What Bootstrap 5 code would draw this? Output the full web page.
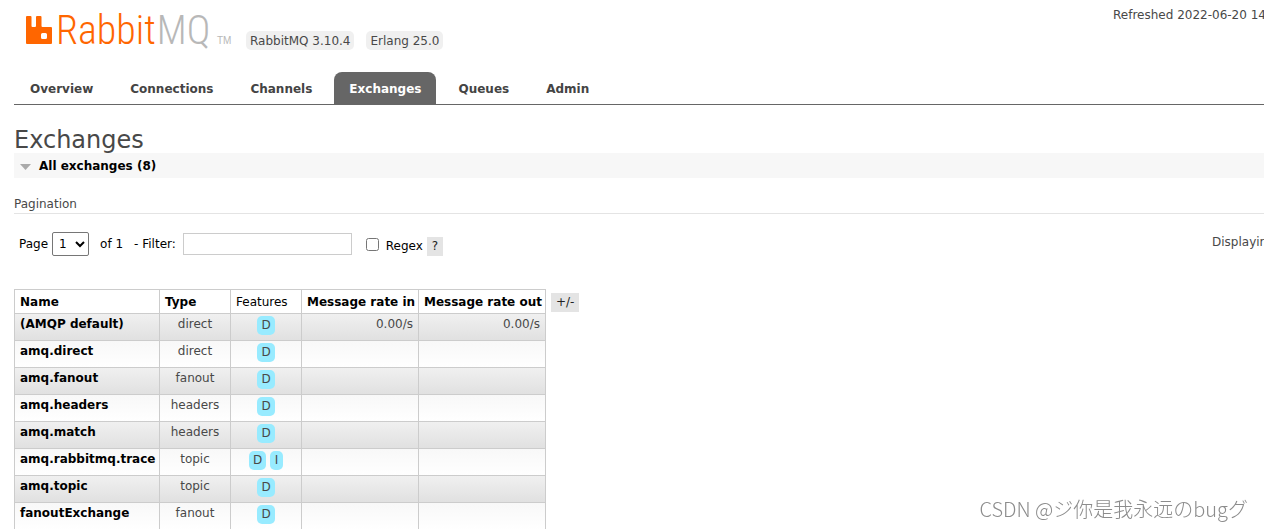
<!DOCTYPE html>
<html lang="en">
<head>
<meta charset="utf-8">
<meta name="viewport" content="width=device-width, initial-scale=1">
<title>RabbitMQ Management</title>
<link href="https://cdn.jsdelivr.net/npm/bootstrap@5.3.0/dist/css/bootstrap.min.css" rel="stylesheet">
<style>
body { font: 12px/17px Verdana, "DejaVu Sans", sans-serif; color: #484848; background: #fff; overflow: hidden; }
a { color: inherit; text-decoration: none; }
.page-shell { padding-left: 14px; }
.top-bar { height: 56px; }
.logo { padding: 14px 0 0 12px; color: #f60; }
.logo svg { margin-top: 2px; }
.logo-name { font: 300 40px/34px "Roboto Condensed", "Liberation Sans Narrow", sans-serif; margin-left: 3px; width: 160px; white-space: nowrap; }
.logo-name span { color: #b8b8b8; margin-left: 1px; }
.logo-tm { font: 10px/13px "Liberation Sans", sans-serif; color: #b8b8b8; margin: 20px 0 0 1px; width: 15px; }
.version { background: #f0f0f0; border-radius: 5px; padding: 2px 4px 0; line-height: 17px; }
.versions { gap: 12px; margin: 31px 0 0 14px; }
.clipped { overflow: hidden; white-space: nowrap; }
.refreshed { width: 151px; padding-top: 7px; }
.displaying { width: 52px; color: #484848; }
.main-tabs { border-bottom: 1px solid #666; margin-top: 16px; padding-left: 1px; gap: 7px; }
.main-tabs a { display: block; padding: 9px 15px 6px; font-weight: bold; border-radius: 8px 8px 0 0; color: #444; }
.main-tabs a.active { background: #666; color: #fff; }
h1 { font-size: 24px; line-height: 26px; font-weight: normal; margin: 22px 0 0; }
.section-toggle { background: #f7f7f7; border: 0; padding: 5px 6px 3px; width: 100%; text-align: left; font-weight: bold; color: #000; gap: 8px; }
h2 { font-size: 12px; line-height: 17px; font-weight: normal; margin: 18px 0; border-bottom: 1px solid #e4e4e4; }
.filter-form { color: #000; padding-left: 5px; height: 24px; }
.filter-form select { width: 37px; height: 24px; border: 1px solid #767676; border-radius: 2px; background: #fff; margin: 0 11px 0 4px; color: #000; padding: 0 2px; }
.filter-label { margin-left: 11px; }
.filter-form input[type=text] { width: 169px; height: 22px; border: 1px solid #ccc; padding: 0 4px; margin-left: 7px; }
.filter-form input[type=checkbox] { width: 13px; height: 13px; margin: 0 7px 0 14px; }
.grey-btn { border: 0; background: #e4e4e4; color: #222; padding: 1px 5px; height: 19px; line-height: 17px; }
.exchange-area { margin-top: 33px; gap: 5px; }
.exchange-list { border-collapse: collapse; table-layout: fixed; width: 532px; }
.exchange-list th, .exchange-list td { border: 1px solid #ccc; padding: 2px 5px; vertical-align: top; white-space: nowrap; }
.exchange-list th { color: #000; }
.exchange-list thead th { padding-top: 4px; height: 24px; }
.exchange-list tbody td { text-align: center; }
.exchange-list tbody td.rate { text-align: right; }
.exchange-list tbody tr { height: 27px; background: linear-gradient(#f8f8f8, #fff); }
.exchange-list tbody tr:nth-child(odd) { background: linear-gradient(#f0f0f0, #e0e0e0); }
.exchange-list .features { padding: 2px 0; }
.feature { display: inline-block; background: #98ebff; border-radius: 5px; padding: 1px 4px; margin: 0 2px; line-height: 17px; min-width: 13px; }
.col-name { width: 145px; } .col-type, .col-features { width: 71px; } .col-in { width: 117px; } .col-out { width: 127px; }
.watermark { position: fixed; right: 16px; bottom: 7px; font: 300 20px/26px "Noto Sans CJK SC", sans-serif; color: #8c8c8c; text-shadow: -1px -1px 0 #fff; white-space: nowrap; }
</style>
</head>
<body>
<div class="page-shell">
  <header class="top-bar d-flex align-items-start">
    <a class="logo d-flex" href="#" aria-label="RabbitMQ">
      <svg width="27" height="28" viewBox="0 0 27 28" aria-hidden="true"><path fill="#f60" fill-rule="evenodd" d="M1 0h3.500q1 0 1 1v9q0 1 1 1H9q1 0 1-1V1q0-1 1-1h3.500q1 0 1 1v9q0 1 1 1H25q1 0 1 1v15q0 1-1 1H1q-1 0-1-1V1q0-1 1-1zM16.500 17q-1.500 0-1.500 1.500v3q0 1.500 1.500 1.500h3q1.500 0 1.500-1.500v-3q0-1.500-1.500-1.500z"/></svg>
      <div class="logo-name">Rabbit<span>MQ</span></div>
      <div class="logo-tm">TM</div>
    </a>
    <div class="versions d-flex">
      <span class="version">RabbitMQ 3.10.4</span>
      <span class="version">Erlang 25.0</span>
    </div>
    <div class="refreshed clipped ms-auto">Refreshed 2022-06-20 14</div>
  </header>
  <nav>
    <ul class="main-tabs list-unstyled d-flex mb-0">
      <li><a href="#">Overview</a></li>
      <li><a href="#">Connections</a></li>
      <li><a href="#">Channels</a></li>
      <li><a class="active" href="#" aria-current="page">Exchanges</a></li>
      <li><a href="#">Queues</a></li>
      <li><a href="#">Admin</a></li>
    </ul>
  </nav>
  <main>
    <h1>Exchanges</h1>
    <button type="button" class="section-toggle d-flex align-items-center"><svg width="11" height="6" aria-hidden="true"><path fill="#aaa" d="M0 0h11L5.500 6z"/></svg>All exchanges (8)</button>
    <h2>Pagination</h2>
    <form class="filter-form d-flex align-items-center">
      <label for="page">Page</label>
      <select id="page"><option>1</option></select>
      <span>of 1</span>
      <label for="filter" class="filter-label">- Filter:</label>
      <input type="text" id="filter">
      <input type="checkbox" id="regex">
      <label for="regex" class="pt-1">Regex</label>
      <button type="button" class="grey-btn ms-1 mt-1">?</button>
      <span class="displaying clipped ms-auto mb-1">Displaying</span>
    </form>
    <div class="exchange-area d-flex align-items-start">
      <table class="exchange-list">
        <colgroup><col class="col-name"><col class="col-type"><col class="col-features"><col class="col-in"><col class="col-out"></colgroup>
        <thead><tr><th scope="col"><a href="#">Name</a></th><th scope="col"><a href="#">Type</a></th><th scope="col" class="fw-normal">Features</th><th scope="col"><a href="#">Message rate in</a></th><th scope="col"><a href="#">Message rate out</a></th></tr></thead>
        <tbody>
          <tr><th scope="row"><a href="#">(AMQP default)</a></th><td>direct</td><td class="features"><span class="feature">D</span></td><td class="rate">0.00/s</td><td class="rate">0.00/s</td></tr>
          <tr><th scope="row"><a href="#">amq.direct</a></th><td>direct</td><td class="features"><span class="feature">D</span></td><td></td><td></td></tr>
          <tr><th scope="row"><a href="#">amq.fanout</a></th><td>fanout</td><td class="features"><span class="feature">D</span></td><td></td><td></td></tr>
          <tr><th scope="row"><a href="#">amq.headers</a></th><td>headers</td><td class="features"><span class="feature">D</span></td><td></td><td></td></tr>
          <tr><th scope="row"><a href="#">amq.match</a></th><td>headers</td><td class="features"><span class="feature">D</span></td><td></td><td></td></tr>
          <tr><th scope="row"><a href="#">amq.rabbitmq.trace</a></th><td>topic</td><td class="features"><span class="feature">D</span><span class="feature">I</span></td><td></td><td></td></tr>
          <tr><th scope="row"><a href="#">amq.topic</a></th><td>topic</td><td class="features"><span class="feature">D</span></td><td></td><td></td></tr>
          <tr><th scope="row"><a href="#">fanoutExchange</a></th><td>fanout</td><td class="features"><span class="feature">D</span></td><td></td><td></td></tr>
        </tbody>
      </table>
      <button type="button" class="grey-btn mt-1">+/-</button>
    </div>
  </main>
</div>
<div class="watermark">CSDN @ジ你是我永远のbugグ</div>
<script src="https://cdn.jsdelivr.net/npm/bootstrap@5.3.0/dist/js/bootstrap.bundle.min.js"></script>
</body>
</html>
